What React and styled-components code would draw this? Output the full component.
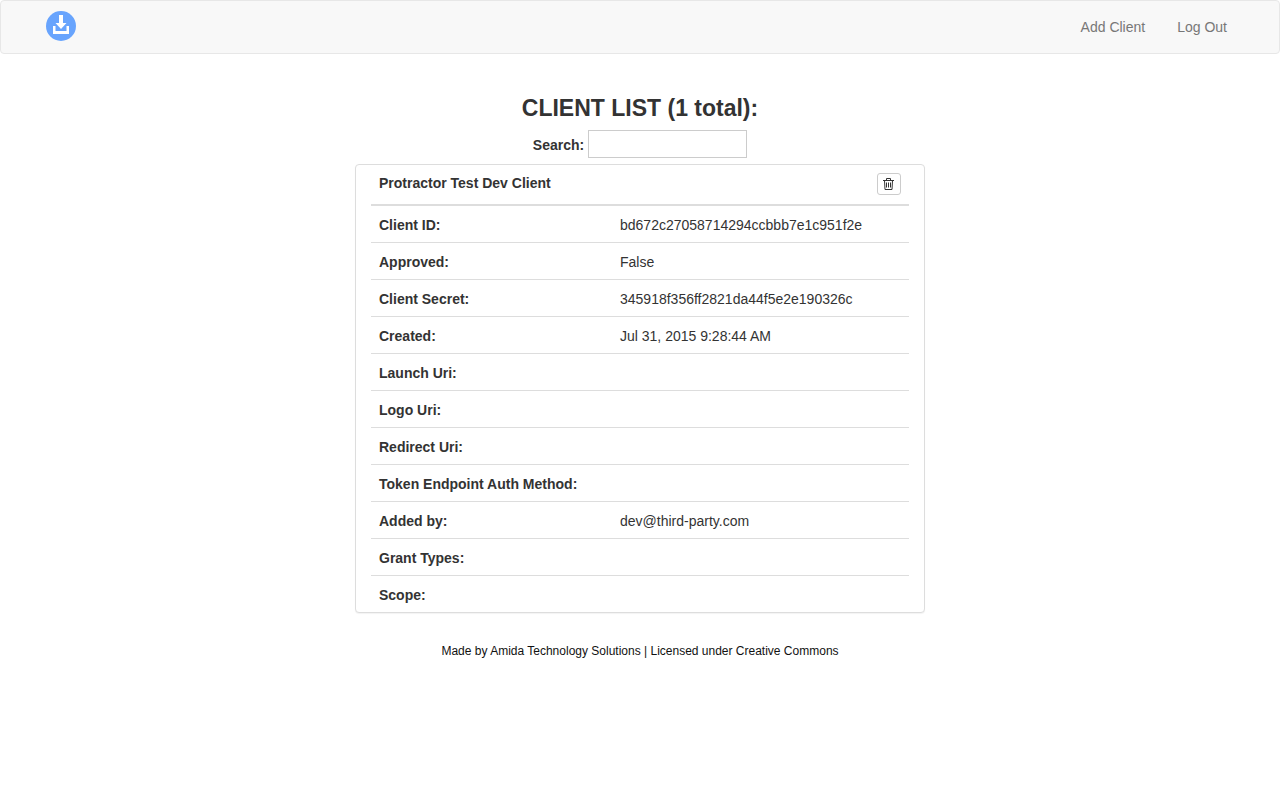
import React, { useState } from "react";
import styled, { createGlobalStyle } from "styled-components";

const GlobalStyle = createGlobalStyle`
  *, *::before, *::after { box-sizing: border-box; }
  body {
    margin: 0;
    background: #fff;
    color: #333;
    font: 14px/20px "Liberation Sans", Arial, sans-serif;
  }
`;

const Navbar = styled.nav`
  display: flex;
  align-items: center;
  justify-content: space-between;
  min-height: 54px;
  padding: 0 36px 0 44px;
  background: #f8f8f8;
  border: 1px solid #e7e7e7;
  border-radius: 4px;
`;

const Brand = styled.a`
  display: block;
  height: 34px;
`;

const NavLinks = styled.div`
  display: flex;
`;

const NavLink = styled.a`
  padding: 16px;
  color: #777;
  text-decoration: none;
`;

const Main = styled.main`
  width: 100%;
  max-width: 570px;
  margin: 0 auto;
  padding-top: 40px;
`;

const Title = styled.h1`
  margin: 0 0 8px;
  font-size: 23px;
  line-height: 28px;
  font-weight: 700;
  text-align: center;
`;

const SearchRow = styled.form`
  display: flex;
  align-items: center;
  justify-content: center;
  gap: 4px;
  margin-bottom: 6px;
`;

const SearchLabel = styled.label`
  padding-top: 2px;
  font-weight: 700;
`;

const SearchInput = styled.input`
  width: 159px;
  height: 28px;
  padding: 2px 4px;
  border: 1px solid #ccc;
  border-radius: 0;
  font: inherit;
  color: inherit;
`;

const Panel = styled.section`
  padding: 0 15px;
  background: #fff;
  border: 1px solid #ddd;
  border-radius: 4px;
  box-shadow: 0 1px 1px rgba(0, 0, 0, 0.05);
`;

const Table = styled.table`
  width: 100%;
  table-layout: fixed;
  border-spacing: 0;
`;

const HeadCell = styled.th`
  width: ${(p) => (p.$label ? "241px" : "auto")};
  height: 41px;
  padding: 8px;
  border-bottom: 2px solid #ddd;
  text-align: ${(p) => (p.$label ? "left" : "right")};
  vertical-align: top;
`;

const Row = styled.tr`
  & + & > * { border-top: 1px solid #ddd; }
`;

const LabelCell = styled.th`
  padding: 9px 8px 7px;
  text-align: left;
  vertical-align: top;
`;

const ValueCell = styled.td`
  padding: 9px 8px 7px;
  vertical-align: top;
`;

const DeleteButton = styled.button`
  display: inline-flex;
  align-items: center;
  justify-content: center;
  width: 24px;
  height: 22px;
  padding: 0;
  background: #fff;
  border: 1px solid #ccc;
  border-radius: 3px;
  color: #333;
  vertical-align: top;
`;

const Footer = styled.footer`
  padding: 28px 0;
  color: #111;
  font-size: 12px;
  text-align: center;
`;

const FIELDS = [
  ["Client ID:", "bd672c27058714294ccbbb7e1c951f2e"],
  ["Approved:", "False"],
  ["Client Secret:", "345918f356ff2821da44f5e2e190326c"],
  ["Created:", "Jul 31, 2015 9:28:44 AM"],
  ["Launch Uri:", ""],
  ["Logo Uri:", ""],
  ["Redirect Uri:", ""],
  ["Token Endpoint Auth Method:", ""],
  ["Added by:", "dev@third-party.com"],
  ["Grant Types:", ""],
  ["Scope:", ""],
];

function DownloadLogo() {
  return (
    <svg width="32" height="32" viewBox="0 0 32 32" aria-hidden="true">
      <circle cx="16" cy="16" r="15" fill="#68a4fd" />
      <path fill="#fff" d="M14 5h4v8h3.5L16 19l-5.500-6H14zM8 16h2.500v5h11v-5H24v8H8z" />
    </svg>
  );
}

function TrashIcon() {
  return (
    <svg width="12" height="14" viewBox="0 0 12 14" fill="none" stroke="currentColor" aria-hidden="true">
      <path d="M0 3.5h11M3.500 3.500v-2h4v2M1.500 3.500l.5 9h7l.5-9" />
      <path d="M3.500 5.500v5M5.500 5.500v5M7.500 5.500v5" />
    </svg>
  );
}

export default function App() {
  const [query, setQuery] = useState("");
  return (
    <>
      <GlobalStyle />
      <Navbar>
        <Brand href="#" aria-label="Home"><DownloadLogo /></Brand>
        <NavLinks>
          <NavLink href="#add">Add Client</NavLink>
          <NavLink href="#logout">Log Out</NavLink>
        </NavLinks>
      </Navbar>
      <Main>
        <Title>CLIENT LIST (1 total):</Title>
        <SearchRow onSubmit={(e) => e.preventDefault()}>
          <SearchLabel htmlFor="search">Search:</SearchLabel>
          <SearchInput id="search" value={query} onChange={(e) => setQuery(e.target.value)} />
        </SearchRow>
        <Panel>
          <Table>
            <thead>
              <tr>
                <HeadCell $label scope="col">Protractor Test Dev Client</HeadCell>
                <HeadCell scope="col">
                  <DeleteButton type="button" aria-label="Delete client"><TrashIcon /></DeleteButton>
                </HeadCell>
              </tr>
            </thead>
            <tbody>
              {FIELDS.map(([label, value]) => (
                <Row key={label}>
                  <LabelCell scope="row">{label}</LabelCell>
                  <ValueCell>{value}</ValueCell>
                </Row>
              ))}
            </tbody>
          </Table>
        </Panel>
        <Footer>Made by Amida Technology Solutions | Licensed under Creative Commons</Footer>
      </Main>
    </>
  );
}
